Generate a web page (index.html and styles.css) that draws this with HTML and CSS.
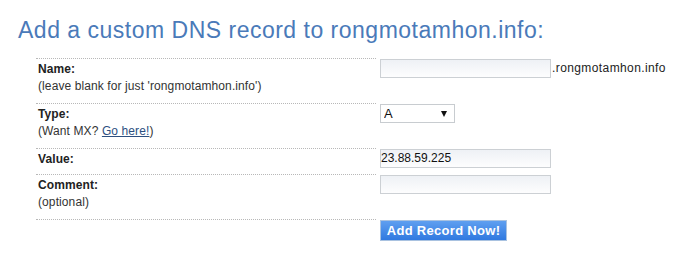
FILE: index.html
```html
<!DOCTYPE html>
<html>
<head>
<meta charset="utf-8">
<link rel="stylesheet" href="styles.css">
</head>
<body>
<div class="page">
  <h1 class="title">Add a custom DNS record to rongmotamhon.info:</h1>
  <table class="dns-form">
    <tr>
      <td class="label-cell"><b class="label">Name:</b><br><span class="note">(leave blank for just 'rongmotamhon.info')</span></td>
      <td class="field-cell"><input class="text-input" type="text"><span class="suffix">.rongmotamhon.info</span></td>
    </tr>
    <tr>
      <td class="label-cell"><b class="label">Type:</b><br><span class="note">(Want MX? <a class="link" href="#">Go here!</a>)</span></td>
      <td class="field-cell"><span class="select-wrap"><select class="type-select"><option>A</option></select></span></td>
    </tr>
    <tr>
      <td class="label-cell single"><b class="label">Value:</b></td>
      <td class="field-cell"><input class="text-input" type="text" value="23.88.59.225"></td>
    </tr>
    <tr>
      <td class="label-cell"><b class="label">Comment:</b><br><span class="note">(optional)</span></td>
      <td class="field-cell"><input class="text-input" type="text"></td>
    </tr>
    <tr>
      <td class="label-cell empty"></td>
      <td class="field-cell"><button class="submit" type="button">Add Record Now!</button></td>
    </tr>
  </table>
</div>
</body>
</html>
```

FILE: styles.css
```css
html, body {
  margin: 0;
  padding: 0;
  background: #fff;
}
.page {
  padding: 18px 0 0 18px;
  font-family: "Liberation Sans", Arial, sans-serif;
}
.title {
  margin: 0 0 15px 0;
  font-size: 23px;
  line-height: 25px;
  font-weight: normal;
  letter-spacing: 0.5px;
  color: #4a7ab9;
}
.dns-form {
  margin-left: 18px;
  border-collapse: collapse;
  border-spacing: 0;
}
.label-cell {
  width: 338px;
  padding: 2px 0 8px 2px;
  border-top: 1px dotted #b8b8b8;
  vertical-align: top;
  font-size: 12px;
  line-height: 17px;
  letter-spacing: 0.1px;
  color: #333;
}
.label-cell.single {
  padding-bottom: 6px;
}
.label-cell.empty {
  padding: 0;
}
.label {
  color: #222;
}
.note {
  color: #333;
}
.link {
  color: #2d4f7f;
  text-decoration: underline;
}
.field-cell {
  padding: 0 0 0 4px;
  vertical-align: top;
  font-size: 12px;
  line-height: 19px;
  color: #222;
  white-space: nowrap;
}
.text-input {
  box-sizing: border-box;
  width: 171px;
  height: 19px;
  margin: 0;
  padding: 0;
  border: 1px solid #ccd0d4;
  background: linear-gradient(#eef1f5, #fdfdfe);
  font-family: "Liberation Sans", Arial, sans-serif;
  font-size: 12px;
  color: #111;
  vertical-align: top;
  outline: none;
}
.suffix {
  display: inline-block;
  line-height: 19px;
  font-size: 12px;
  letter-spacing: 0.4px;
  color: #222;
  padding-left: 1px;
  vertical-align: top;
}
.select-wrap {
  position: relative;
  display: inline-block;
  vertical-align: top;
}
.select-wrap::after {
  content: "";
  position: absolute;
  right: 8px;
  top: 7px;
  border-left: 3px solid transparent;
  border-right: 3px solid transparent;
  border-top: 6px solid #111;
  pointer-events: none;
}
.type-select {
  -webkit-appearance: none;
  appearance: none;
  box-sizing: border-box;
  display: block;
  width: 75px;
  height: 19px;
  margin: 0;
  padding: 0 0 0 3px;
  border: 1px solid #c8ccd0;
  border-radius: 0;
  background: #fff;
  font-family: "Liberation Sans", Arial, sans-serif;
  font-size: 13px;
  color: #111;
}
.submit {
  box-sizing: border-box;
  display: block;
  width: 127px;
  height: 21px;
  margin: 0;
  padding: 0;
  border: 1px solid #a9c2e0;
  background: linear-gradient(#5f9ff0, #3079e0);
  color: #fff;
  font-family: "Liberation Sans", Arial, sans-serif;
  font-size: 13px;
  font-weight: bold;
  letter-spacing: 0.3px;
  cursor: pointer;
}
```
